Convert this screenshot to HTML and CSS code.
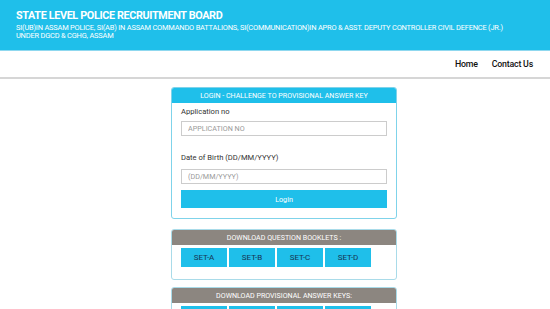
FILE: index.html
```html
<!DOCTYPE html>
<html lang="en">
<head>
    <meta charset="UTF-8">
    <meta name="viewport" content="width=device-width, initial-scale=1.0">
    <title>SLPRB Assam</title>
    <link rel="stylesheet" href="styles.css">
</head>
<body>
    <header class="top">
        <div class="top__title">STATE LEVEL POLICE RECRUITMENT BOARD</div>
        <div class="top__sub">SI(UB)IN ASSAM POLICE, SI(AB) IN ASSAM COMMANDO BATTALIONS, SI(COMMUNICATION)IN APRO &amp; ASST. DEPUTY CONTROLLER CIVIL DEFENCE (JR.)<br>UNDER DGCD &amp; CGHG, ASSAM</div>
    </header>
    <nav class="nav">
        <a href="#">Home</a>
        <a href="#">Contact Us</a>
    </nav>
    <main class="main">
        <div class="card card--login">
            <div class="card__head">LOGIN - CHALLENGE TO PROVISIONAL ANSWER KEY</div>
            <form class="card__body login">
                <label class="login__label">Application no</label>
                <input type="text" class="login__input" placeholder="APPLICATION NO">
                <label class="login__label login__label--dob">Date of Birth (DD/MM/YYYY)</label>
                <input type="text" class="login__input" placeholder="(DD/MM/YYYY)">
                <button type="button" class="login__btn">Login</button>
            </form>
        </div>
        <div class="card card--grey card--booklets">
            <div class="card__head card__head--grey">DOWNLOAD QUESTION BOOKLETS :</div>
            <div class="card__body sets">
                <a href="#" class="set">SET-A</a>
                <a href="#" class="set">SET-B</a>
                <a href="#" class="set">SET-C</a>
                <a href="#" class="set">SET-D</a>
            </div>
        </div>
        <div class="card card--grey card--keys">
            <div class="card__head card__head--grey">DOWNLOAD PROVISIONAL ANSWER KEYS:</div>
            <div class="card__body sets">
                <a href="#" class="set">SET-A</a>
                <a href="#" class="set">SET-B</a>
                <a href="#" class="set">SET-C</a>
                <a href="#" class="set">SET-D</a>
            </div>
        </div>
    </main>
</body>
</html>
```
FILE: styles.css
```css
body {
    margin: 0;
    background-color: #fff;
    font-family: Roboto, "Liberation Sans", sans-serif;
    color: #333;
    overflow: hidden;
}

.top {
    background-color: #1fbfea;
    color: #fff;
    padding: 10px 16px 11px;
    height: 29px;
}

.top__title {
    font-size: 10.8px;
    font-weight: 700;
    letter-spacing: -0.35px;
    line-height: 12px;
}

.top__sub {
    font-size: 7.45px;
    line-height: 8px;
    margin-top: 2px;
    letter-spacing: -0.2px;
}

.nav {
    display: flex;
    justify-content: flex-end;
    gap: 14px;
    height: 26px;
    align-items: center;
    padding-right: 17px;
    border-bottom: 2px solid #d6d6d6;
    border-top: 1px solid #8fd8ef;
}

.nav a {
    color: #111;
    text-decoration: none;
    font-size: 8.8px;
    font-weight: 500;
    letter-spacing: -0.2px;
}

.main {
    width: 226px;
    margin: 8px 0 0 171px;
    display: flex;
    flex-direction: column;
}

.card {
    border: 1px solid #7fd3ea;
    border-radius: 3px;
    background-color: #fff;
}

.card--grey {
    border-color: #a9dbe9;
}

.card--booklets {
    margin-top: 10px;
}

.card--keys {
    margin-top: 7px;
}

.card__head {
    background-color: #1fbfea;
    color: #fff;
    font-size: 7.1px;
    text-align: center;
    height: 15px;
    line-height: 15px;
    border-radius: 2px 2px 0 0;
}

.card__head--grey {
    background-color: #8c8680;
}

.card__body {
    padding: 4px 9px 10px 9px;
}

.login {
    display: flex;
    flex-direction: column;
    margin: 0;
}

.login__label {
    font-size: 7.6px;
    color: #333;
    line-height: 10px;
    margin-bottom: 4px;
}

.login__label--dob {
    margin-top: 17px;
    margin-bottom: 6px;
}

.login__input {
    height: 15px;
    border: 1px solid #ccc;
    padding: 0 6px;
    font-size: 7.2px;
    font-family: inherit;
    color: #555;
    box-sizing: border-box;
}

.login__input::placeholder {
    color: #999;
}

.login__btn {
    margin-top: 6px;
    height: 18px;
    background-color: #1fbfea;
    border: none;
    color: #fff;
    font-size: 7.2px;
    font-family: inherit;
    padding: 0;
}

.sets {
    display: flex;
    gap: 2px;
    padding: 3px 9px 12px 9px;
}

.set {
    width: 46px;
    height: 19px;
    line-height: 19px;
    background-color: #1fbfea;
    color: #163654;
    text-decoration: none;
    text-align: center;
    font-size: 8px;
}
```
